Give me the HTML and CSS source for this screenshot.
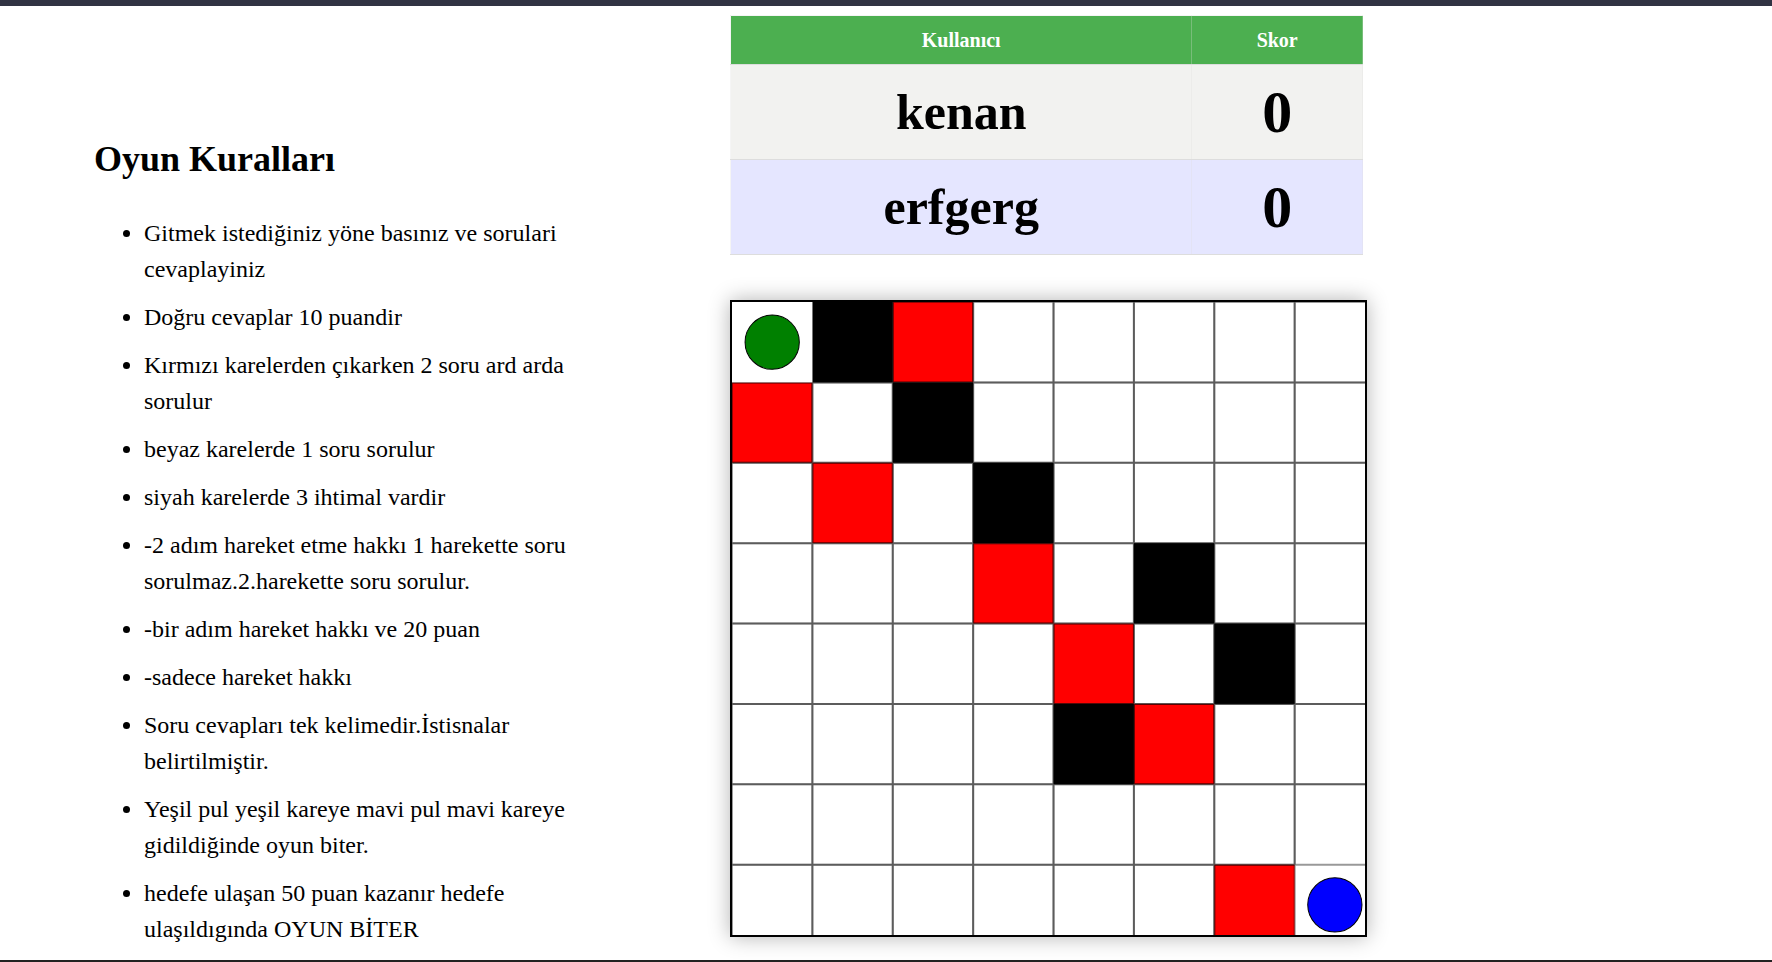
FILE: index.html
```html
<!DOCTYPE html>
<html lang="tr">
<head>
<meta charset="utf-8">
<title>Oyun</title>
<link rel="stylesheet" href="styles.css">
</head>
<body>
<div class="topbar"></div>
<main class="layout">
  <section class="rules">
    <h1 class="rules-title">Oyun Kuralları</h1>
    <ul class="rules-list">
      <li>Gitmek istediğiniz yöne basınız ve sorulari cevaplayiniz</li>
      <li>Doğru cevaplar 10 puandir</li>
      <li>Kırmızı karelerden çıkarken 2 soru ard arda sorulur</li>
      <li>beyaz karelerde 1 soru sorulur</li>
      <li>siyah karelerde 3 ihtimal vardir</li>
      <li>-2 adım hareket etme hakkı 1 harekette soru sorulmaz.2.harekette soru sorulur.</li>
      <li>-bir adım hareket hakkı ve 20 puan</li>
      <li>-sadece hareket hakkı</li>
      <li>Soru cevapları tek kelimedir.İstisnalar belirtilmiştir.</li>
      <li>Yeşil pul yeşil kareye mavi pul mavi kareye gidildiğinde oyun biter.</li>
      <li>hedefe ulaşan 50 puan kazanır hedefe ulaşıldıgında OYUN BİTER</li>
    </ul>
  </section>
  <section class="game">
    <table class="scores">
      <thead>
        <tr><th scope="col">Kullanıcı</th><th scope="col" class="score-col">Skor</th></tr>
      </thead>
      <tbody>
        <tr><td class="player">kenan</td><td class="score">0</td></tr>
        <tr><td class="player">erfgerg</td><td class="score">0</td></tr>
      </tbody>
    </table>
    <svg class="board" viewBox="0 0 630 630" role="img" aria-label="Oyun tahtası">
      <rect class="home" width="630" height="630"/>
      <g class="squares">
        <rect class="red" x="160" y="0" width="80" height="80"/>
        <rect class="red" x="0" y="80" width="80" height="80"/>
        <rect class="red" x="80" y="160" width="80" height="80"/>
        <rect class="red" x="240" y="240" width="80" height="80"/>
        <rect class="red" x="320" y="320" width="80" height="80"/>
        <rect class="red" x="400" y="400" width="80" height="80"/>
        <rect class="red" x="480" y="560" width="80" height="80"/>
        <rect x="80" y="0" width="80" height="80"/>
        <rect x="160" y="80" width="80" height="80"/>
        <rect x="240" y="160" width="80" height="80"/>
        <rect x="400" y="240" width="80" height="80"/>
        <rect x="480" y="320" width="80" height="80"/>
        <rect x="320" y="400" width="80" height="80"/>
      </g>
      <path class="lines" d="M0 0V630M80 0V630M160 0V630M240 0V630M320 0V630M400 0V630M480 0V630M560 0V630M0 0H630M0 80H630M0 160H630M0 240H630M0 320H630M0 400H630M0 480H630M0 560H630"/>
      <path class="lines" d="M80 0V630M160 0V630M240 0V630M320 0V630M400 0V630M480 0V630M560 0V560M0 80H630M0 160H630M0 240H630M0 320H630M0 400H630M0 480H630M0 560H560"/>
      <rect class="home" width="80" height="80"/>
      <circle class="token green" cx="40" cy="40" r="27"/>
      <circle class="token blue" cx="600" cy="600" r="27"/>
    </svg>
  </section>
</main>
<div class="bottombar"></div>
</body>
</html>
```
FILE: styles.css
```css
* {
  box-sizing: border-box;
}

body {
  margin: 0;
  min-height: 100vh;
  display: flex;
  flex-direction: column;
  background: #fff;
  color: #000;
  font-family: "Liberation Serif", "Times New Roman", serif;
}

.topbar {
  height: 6px;
  background: #313343;
}

.bottombar {
  height: 2px;
  background: #222;
}

.layout {
  flex: 1;
  display: grid;
  grid-template-columns: 730fr 637fr 405fr;
}

.rules {
  padding: 133px 155px 0 94px;
}

.rules-title {
  margin: 0 0 35px;
  font-size: 36px;
  line-height: 41px;
}

.rules-list {
  margin: 0;
  padding: 0 0 0 50px;
  font-size: 24px;
  line-height: 36px;
}

.rules-list li {
  margin-bottom: 12px;
}

.game {
  padding-top: 9px;
}

.scores {
  width: calc(100% - 4px);
  table-layout: fixed;
  border-collapse: collapse;
  text-align: center;
  font-weight: bold;
}

.scores th,
.scores td {
  padding: 0;
  border: 1px solid rgba(221, 221, 221, 0.3);
  border-bottom-color: #ddd;
}

.scores th {
  height: 49px;
  background: #4caf50;
  color: #fff;
  font-size: 20px;
}

.score-col {
  width: 27%;
}

.scores td {
  height: 95px;
}

.scores tbody tr:nth-child(odd) {
  background: #f2f2f0;
}

.scores tbody tr:nth-child(even) {
  background: #e5e6ff;
}

.player {
  font-size: 50px;
}

.score {
  font-size: 60px;
  line-height: 60px;
}

.board {
  display: block;
  width: 100%;
  margin-top: 45px;
  border: 2px solid #000;
  box-shadow: 0 0 20px rgba(0, 0, 0, 0.3);
}

.red {
  fill: #f00;
}

.lines {
  fill: none;
  stroke: #000;
  stroke-width: 2;
  stroke-opacity: 0.4;
}

.home {
  fill: #fff;
}

.token {
  stroke: #000;
}

.green {
  fill: #008000;
}

.blue {
  fill: #00f;
}
```
